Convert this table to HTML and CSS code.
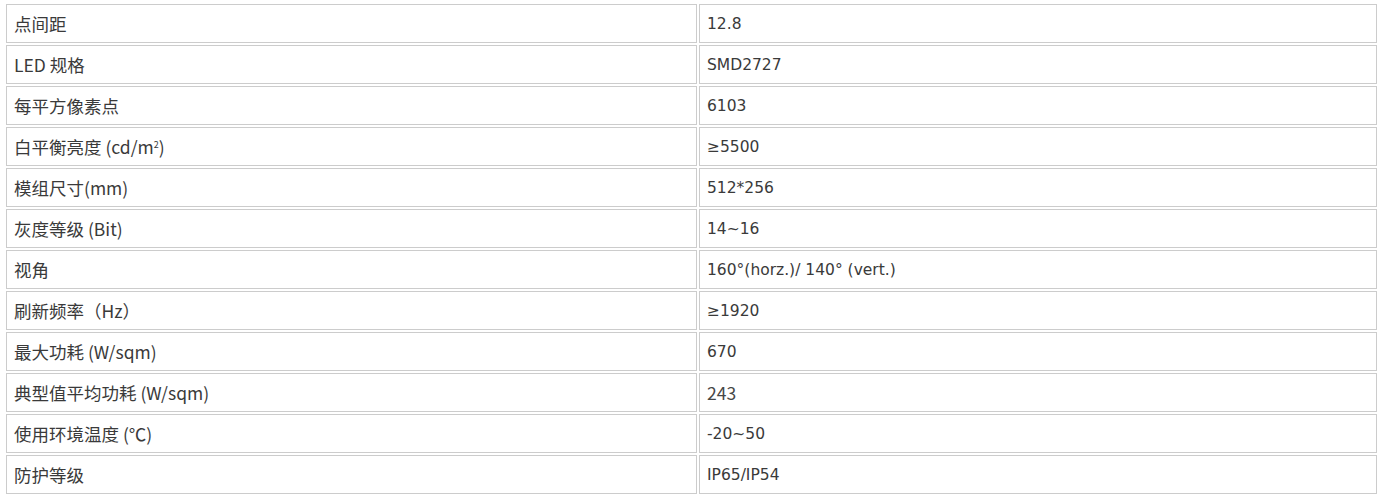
FILE: index.html
```html
<!DOCTYPE html>
<html lang="zh-CN">
<head>
<meta charset="utf-8">
<title>参数</title>
<link rel="stylesheet" href="styles.css">
</head>
<body>
<table class="spec">
  <tbody>
    <tr><td class="k">点间距</td><td class="v">12.8</td></tr>
    <tr><td class="k">LED 规格</td><td class="v">SMD2727</td></tr>
    <tr><td class="k">每平方像素点</td><td class="v">6103</td></tr>
    <tr><td class="k">白平衡亮度 (cd/m<sup>2</sup>)</td><td class="v">≥5500</td></tr>
    <tr><td class="k">模组尺寸(mm)</td><td class="v">512*256</td></tr>
    <tr><td class="k">灰度等级 (Bit)</td><td class="v">14~16</td></tr>
    <tr><td class="k">视角</td><td class="v">160°(horz.)/ 140° (vert.)</td></tr>
    <tr><td class="k">刷新频率（Hz）</td><td class="v">≥1920</td></tr>
    <tr><td class="k">最大功耗 (W/sqm)</td><td class="v">670</td></tr>
    <tr><td class="k">典型值平均功耗 (W/sqm)</td><td class="v alt">243</td></tr>
    <tr><td class="k">使用环境温度 (℃)</td><td class="v">-20~50</td></tr>
    <tr><td class="k">防护等级</td><td class="v">IP65/IP54</td></tr>
  </tbody>
</table>
</body>
</html>
```
FILE: styles.css
```css
html, body {
  margin: 0;
  padding: 0;
  background: #fff;
}
.spec {
  margin: 2px 4px;
  width: 1375px;
  border-collapse: separate;
  border-spacing: 2px;
  table-layout: fixed;
  color: #3a3a3a;
}
.spec td {
  height: 39px;
  padding: 0 7px;
  border: 1px solid #cccccc;
  vertical-align: middle;
  box-sizing: border-box;
  white-space: nowrap;
}
.spec td.k {
  width: 691px;
  font-family: "Noto Sans CJK SC", "Noto Sans", sans-serif;
  font-size: 17.5px;
  line-height: 20px;
}
.spec td.v {
  font-family: "DejaVu Sans", "Noto Sans CJK SC", sans-serif;
  font-size: 15.5px;
  line-height: 20px;
}
.spec td.v.alt {
  font-family: "Noto Sans CJK SC", sans-serif;
  font-size: 17.5px;
  color: #474747;
}
.spec sup {
  font-size: 9px;
  line-height: 0;
  vertical-align: 6px;
}
```
